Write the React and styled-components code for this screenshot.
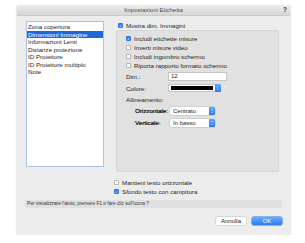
import React from "react";
import styled, { createGlobalStyle } from "styled-components";

const Global = createGlobalStyle`
  html, body {
    margin: 0;
    padding: 0;
    background: #ffffff;
  }
  body {
    font-family: "Liberation Sans", Arial, sans-serif;
    color: #1e1e1e;
  }
`;

const Page = styled.div`
  padding: 5px 0 0 17px;
`;

const Dialog = styled.div`
  width: 273px;
  height: 230px;
  background: #ececec;
  box-shadow: 0 1px 2px rgba(0, 0, 0, 0.25);
  display: flex;
  flex-direction: column;
`;

const TitleBar = styled.div`
  height: 10px;
  background: linear-gradient(#ececec, #d6d6d6);
  border-bottom: 1px solid #c9c9c9;
  display: flex;
  align-items: center;
  justify-content: center;
  position: relative;
  font-size: 6px;
  color: #4a4a4a;
`;

const HelpMark = styled.span`
  position: absolute;
  right: 3px;
  top: 1px;
  font-size: 6.5px;
  font-weight: bold;
  color: #3a3a3a;
`;

const Body = styled.div`
  flex: 1;
  padding: 5px 8px 0 9px;
  display: flex;
  flex-direction: column;
`;

const Top = styled.div`
  display: flex;
`;

const ListBox = styled.div`
  width: 76px;
  height: 143px;
  background: #ffffff;
  border: 1px solid #a9c4e8;
  padding-top: 1px;
  display: flex;
  flex-direction: column;
`;

const ListItem = styled.div`
  height: 7.5px;
  line-height: 7.5px;
  font-size: 6.2px;
  padding-left: 1px;
  white-space: nowrap;
  overflow: hidden;
  background: ${(p) => (p.$selected ? "#1f66d8" : "transparent")};
  color: ${(p) => (p.$selected ? "#ffffff" : "#1e1e1e")};
`;

const RightCol = styled.div`
  margin-left: 12px;
  width: 163px;
  display: flex;
  flex-direction: column;
`;

const CheckRow = styled.div`
  height: 9px;
  display: flex;
  align-items: center;
  gap: 3px;
  font-size: 6.2px;
  white-space: nowrap;
  margin-left: ${(p) => p.$indent || 0}px;
`;

const Box = styled.span`
  width: 5px;
  height: 5px;
  border-radius: 1px;
  box-sizing: border-box;
  flex: none;
  display: flex;
  align-items: center;
  justify-content: center;
  background: ${(p) => (p.$checked ? "#3a84f5" : "#ffffff")};
  border: 1px solid ${(p) => (p.$checked ? "#2f74e0" : "#b4b4b4")};
`;

const Group = styled.div`
  height: 142px;
  box-sizing: border-box;
  background: #e1e1e1;
  border: 1px solid #d6d6d6;
  border-radius: 2px;
  padding: 3px 0 0 9px;
  display: flex;
  flex-direction: column;
`;

const FieldRow = styled.div`
  display: flex;
  align-items: center;
  height: ${(p) => p.$h || 12}px;
  font-size: 6.2px;
  padding-left: ${(p) => p.$indent || 0}px;
`;

const Label = styled.span`
  width: ${(p) => p.$w}px;
  flex: none;
  color: ${(p) => (p.$strong ? "#0e0e0e" : "#1e1e1e")};
  text-shadow: ${(p) => (p.$strong ? "0.2px 0 0 #333" : "none")};
`;

const TextInput = styled.div`
  width: 59px;
  height: 9px;
  box-sizing: border-box;
  background: #ffffff;
  border: 1px solid #c4c4c4;
  font-size: 6px;
  line-height: 7px;
  padding-left: 2px;
`;

const ColorWell = styled.div`
  display: flex;
  height: 8px;
`;

const Swatch = styled.div`
  width: 47px;
  box-sizing: border-box;
  background: #ffffff;
  border: 1px solid #c4c4c4;
  border-right: none;
  padding: 1px 2px;
  display: flex;
  & > div {
    flex: 1;
    background: #000000;
  }
`;

const Stepper = styled.div`
  width: 6px;
  background: linear-gradient(#5ea3fa, #2a78ef);
  border-radius: 0 1.5px 1.5px 0;
  display: flex;
  align-items: center;
  justify-content: center;
`;

const Popup = styled.div`
  width: 45px;
  height: 8px;
  display: flex;
  box-shadow: 0 0 0 0.5px #bdbdbd;
  border-radius: 1.5px;
  background: #ffffff;
`;

const PopupText = styled.div`
  flex: 1;
  font-size: 6px;
  line-height: 8px;
  padding-left: 3px;
`;

const Below = styled.div`
  margin: 6px 0 0 88px;
  display: flex;
  flex-direction: column;
`;

const HelpBar = styled.div`
  margin: 4px 0 0 -1px;
  width: 257px;
  height: 8px;
  border-radius: 2px;
  background: #e0e0e0;
  font-size: 4.8px;
  line-height: 8px;
  padding-left: 2px;
  box-sizing: border-box;
  color: #333333;
  white-space: nowrap;
`;

const Buttons = styled.div`
  margin-top: 9px;
  display: flex;
  justify-content: flex-end;
  gap: 6px;
`;

const Button = styled.div`
  width: 30px;
  height: 8px;
  box-sizing: border-box;
  border-radius: 1.5px;
  font-size: 6px;
  line-height: 8px;
  text-align: center;
  background: ${(p) => (p.$primary ? "linear-gradient(#68acfb, #2b7cf2)" : "#ffffff")};
  color: ${(p) => (p.$primary ? "#ffffff" : "#222222")};
  box-shadow: ${(p) => (p.$primary ? "0 0 0 0.5px #2d74e0" : "0 0 0 0.5px #c0c0c0")};
`;

const Check = () => (
  <svg width="4" height="4" viewBox="0 0 10 10">
    <polyline points="2,5.5 4.2,7.8 8.2,2.2" fill="none" stroke="#fff" strokeWidth="1.8" />
  </svg>
);

const Arrows = () => (
  <svg width="4" height="6" viewBox="0 0 8 12">
    <polyline points="2,4.5 4,2.5 6,4.5" fill="none" stroke="#fff" strokeWidth="1.2" />
    <polyline points="2,7.5 4,9.5 6,7.5" fill="none" stroke="#fff" strokeWidth="1.2" />
  </svg>
);

const CheckBox = ({ checked, children, indent }) => (
  <CheckRow $indent={indent}>
    <Box $checked={checked}>{checked && <Check />}</Box>
    <span>{children}</span>
  </CheckRow>
);

const PopupButton = ({ children }) => (
  <Popup>
    <PopupText>{children}</PopupText>
    <Stepper>
      <Arrows />
    </Stepper>
  </Popup>
);

const items = [
  "Zona copertura",
  "Dimensioni Immagine",
  "Informazioni Lenti",
  "Distanze proiezione",
  "ID Proiettore",
  "ID Proiettore multiplo",
  "Note",
];

export default function App() {
  return (
    <Page>
      <Global />
      <Dialog>
        <TitleBar>
          Impostazioni Etichetta
          <HelpMark>?</HelpMark>
        </TitleBar>
        <Body>
          <Top>
            <ListBox>
              {items.map((t) => (
                <ListItem key={t} $selected={t === "Dimensioni Immagine"}>
                  {t}
                </ListItem>
              ))}
            </ListBox>
            <RightCol>
              <CheckBox checked indent={2}>
                Mostra dim. Immagini
              </CheckBox>
              <Group>
                <CheckBox checked>Includi etichette misure</CheckBox>
                <CheckBox>Inverti misure video</CheckBox>
                <CheckBox>Includi ingombro schermo</CheckBox>
                <CheckBox>Riporta rapporto formato schermo</CheckBox>
                <FieldRow $h={12}>
                  <Label $w={42}>Dim.:</Label>
                  <TextInput>12</TextInput>
                </FieldRow>
                <FieldRow $h={12}>
                  <Label $w={42}>Colore:</Label>
                  <ColorWell>
                    <Swatch>
                      <div />
                    </Swatch>
                    <Stepper>
                      <Arrows />
                    </Stepper>
                  </ColorWell>
                </FieldRow>
                <FieldRow $h={11}>
                  <Label>Allineamento:</Label>
                </FieldRow>
                <FieldRow $h={11} $indent={9}>
                  <Label $w={35} $strong>
                    Orizzontale:
                  </Label>
                  <PopupButton>Centrato</PopupButton>
                </FieldRow>
                <FieldRow $h={13} $indent={9}>
                  <Label $w={35} $strong>
                    Verticale:
                  </Label>
                  <PopupButton>In basso</PopupButton>
                </FieldRow>
              </Group>
            </RightCol>
          </Top>
          <Below>
            <CheckBox>Mantieni testo orizzontale</CheckBox>
            <CheckBox checked>Sfondo testo con campitura</CheckBox>
          </Below>
          <HelpBar>Per visualizzare l'aiuto, premere F1 o fare clic sull'icona ?</HelpBar>
          <Buttons>
            <Button>Annulla</Button>
            <Button $primary>OK</Button>
          </Buttons>
        </Body>
      </Dialog>
    </Page>
  );
}
